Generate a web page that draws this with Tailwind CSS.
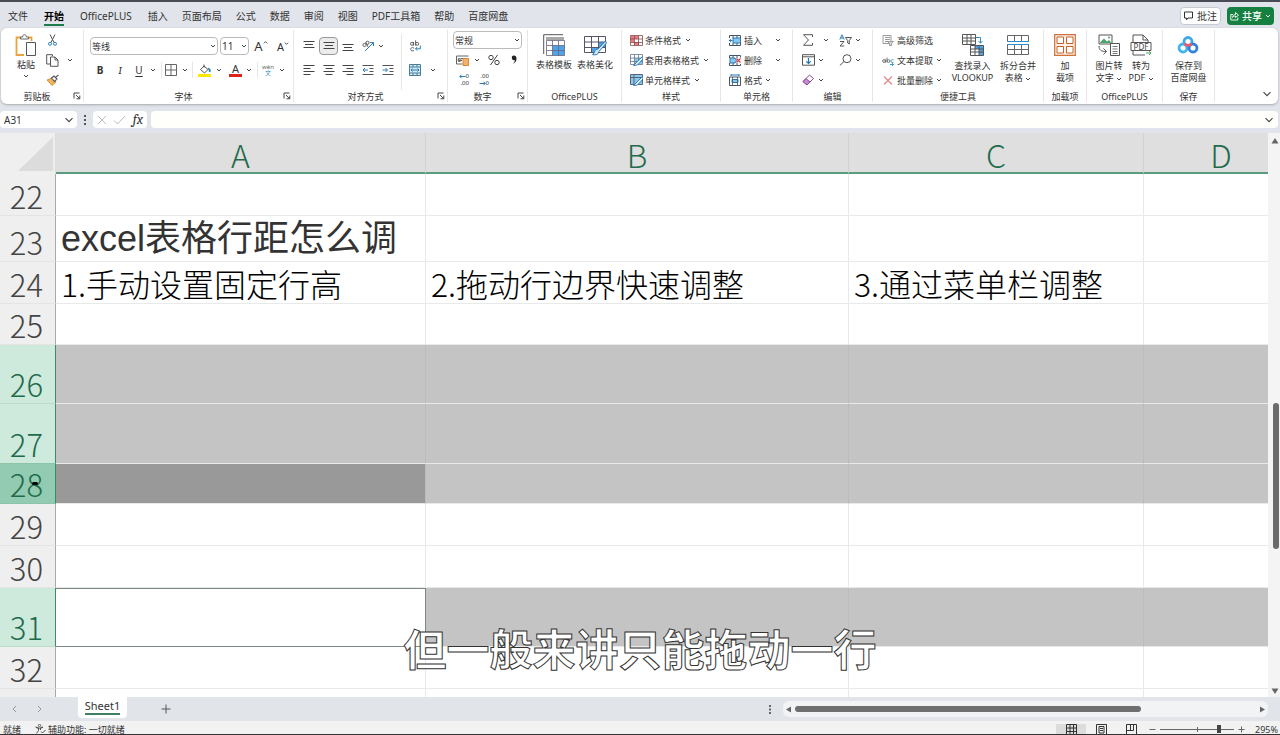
<!DOCTYPE html>
<html lang="zh-CN">
<head>
  <meta charset="UTF-8" />
  <meta name="viewport" content="width=device-width, initial-scale=1" />
  <title>Excel - Sheet1</title>
  <script src="https://cdn.jsdelivr.net/npm/@tailwindcss/browser@4"></script>
  <style>
    body { font-family: "Noto Sans", "Noto Sans CJK SC", sans-serif; }
    .sheet { font-family: "Noto Sans CJK SC", sans-serif; }
    .title-cell { font-family: "Liberation Sans", "Noto Sans CJK SC", sans-serif; }
    .subtitle { font-family: "Noto Sans CJK SC", sans-serif; -webkit-text-stroke: 1px #333; }
  </style>
</head>
<body class="flex h-screen flex-col overflow-hidden border-t-2 border-b border-t-[#4b4b55] border-b-[#333] bg-[#e1e4ea] text-[10px] leading-none text-[#333]">

  <!-- shared glyphs -->
  <svg class="hidden" aria-hidden="true">
    <symbol id="chev" viewBox="0 0 6 6"><path d="M1 2l2 2 2-2" fill="none" stroke="#444" stroke-width="1"/></symbol>
    <symbol id="chev-lg" viewBox="0 0 10 10"><path d="M1.500 3.200l3.500 3.500 3.500-3.500" fill="none" stroke="#444" stroke-width="1.100"/></symbol>
    <symbol id="launch" viewBox="0 0 8 8"><path d="M1 6.500V1h5.500M3 3l3.500 3.500M6.800 3.500v3.300H3.500" fill="none" stroke="#444" stroke-width="1"/></symbol>
  </svg>

  <!-- tabs -->
  <header class="flex h-[26px] shrink-0 items-center justify-between pt-[2px] pr-[6px]">
    <nav class="flex items-center">
      <a href="#" class="px-2">文件</a>
      <a href="#" class="px-2 font-bold text-black"><span class="block border-b-2 border-[#1f7a4d] pt-1 pb-[3px]">开始</span></a>
      <a href="#" class="px-2">OfficePLUS</a>
      <a href="#" class="pr-[7px] pl-2">插入</a>
      <a href="#" class="px-[7px]">页面布局</a>
      <a href="#" class="px-[7px]">公式</a>
      <a href="#" class="px-[7px]">数据</a>
      <a href="#" class="px-[7px]">审阅</a>
      <a href="#" class="px-[7px]">视图</a>
      <a href="#" class="px-[7px]">PDF工具箱</a>
      <a href="#" class="px-[7px]">帮助</a>
      <a href="#" class="px-[7px]">百度网盘</a>
    </nav>
    <div class="flex gap-[6px]">
      <button class="flex h-[18px] items-center gap-1 rounded-sm border border-[#c8cacf] bg-white px-[3px]">
        <svg class="h-[10px] w-[9px]" viewBox="0 0 9 10"><path d="M.5 1h8v6H4L2.500 8.800V7H.5z" fill="none" stroke="#333"/></svg>批注
      </button>
      <button class="flex h-[18px] items-center gap-[3px] rounded-sm bg-[#15803f] px-[3px] font-medium text-white">
        <svg class="h-[10px] w-[9px]" viewBox="0 0 9 10"><path d="M3 3.500H.8v5.500h7V6.500M2.500 6.500c.3-2 1.500-3 3-3V1.500L8.500 4.300 5.500 6.500V5c-1.300 0-2.200.5-3 1.500z" fill="none" stroke="#fff" stroke-width=".9"/></svg>共享
        <svg class="size-[6px]" viewBox="0 0 6 6"><path d="M1 2l2 2 2-2" fill="none" stroke="#fff"/></svg>
      </button>
    </div>
  </header>

  <!-- ribbon -->
  <section class="mr-[2px] ml-px flex h-[76px] shrink-0 rounded-md bg-white pt-[2px] pb-[2px] text-[9px] shadow-sm shadow-black/20">

    <div class="flex w-[83px] flex-col border-r border-[#e6e6e6]">
      <div class="flex h-[60px] pl-[14px]">
        <button class="flex w-[22px] flex-col items-center pt-[4px]">
          <svg class="h-[23px] w-[22px]" viewBox="0 0 22 23"><path d="M9 21H1.500V3.500H6M13 3.500h3.500V7" fill="none" stroke="#e8a33d" stroke-width="1.800"/><path d="M5.500 5V3h2c0-3 4-3 4 0h2v2z" fill="#fff" stroke="#666"/><path d="M11.500 8.500h9v13h-9z" fill="#fff" stroke="#555"/></svg>
          <span class="mt-[3px] whitespace-nowrap">粘贴</span>
          <svg class="mt-1 size-[6px]"><use href="#chev"/></svg>
        </button>
        <div class="ml-[8px] flex w-[14px] flex-col">
          <button class="flex h-5 items-center justify-center" aria-label="剪切"><svg class="h-[12px] w-[9px]" viewBox="0 0 9 12"><path d="M2 .5l4 8M7 .5l-4 8" fill="none" stroke="#555"/><circle cx="2" cy="9.800" r="1.500" fill="none" stroke="#2b7fb8"/><circle cx="7" cy="9.800" r="1.500" fill="none" stroke="#2b7fb8"/></svg></button>
          <button class="flex h-5 items-center justify-center" aria-label="复制"><svg class="h-[13px] w-[13px]" viewBox="0 0 13 13"><path d="M4 10H.7V.7h5.800V2" fill="none" stroke="#555"/><path d="M4.500 3h4.500l3 3v6.300H4.500zM9 3v3h3" fill="#fff" stroke="#555"/></svg></button>
          <button class="flex h-5 items-center justify-center" aria-label="格式刷"><svg class="h-[12px] w-[13px]" viewBox="0 0 13 12"><path d="M1 6l5-2 4 4-4 3.500z" fill="#efb45c" stroke="#c98422" stroke-width=".8"/><path d="M5.500 4L8 2l3 3-2.500 2.500zM9.500 3.500L12.500.8" fill="#fff" stroke="#555" stroke-width="1.100"/></svg></button>
        </div>
        <svg class="mt-[27px] ml-[8px] size-[6px]"><use href="#chev"/></svg>
      </div>
      <div class="flex h-3 items-center"><span class="flex-1 text-center">剪贴板</span><button aria-label="剪贴板设置" class="mr-[2px]"><svg class="size-[8px]"><use href="#launch"/></svg></button></div>
    </div>

    <div class="flex w-[210px] flex-col border-r border-[#e6e6e6]">
      <div class="h-[60px] pt-1 pl-[6px]">
        <div class="flex h-6 items-center gap-[2px]">
          <label class="relative w-[128px]"><select aria-label="字体" class="block h-[18px] w-full appearance-none rounded-sm border border-[#bbb] bg-white px-px"><option>等线</option></select><svg class="absolute top-[6px] right-[2px] size-[6px]"><use href="#chev"/></svg></label>
          <label class="relative w-[29px]"><select aria-label="字号" class="block h-[18px] w-full appearance-none rounded-sm border border-[#bbb] bg-white px-px text-[10px]"><option>11</option></select><svg class="absolute top-[6px] right-[2px] size-[6px]"><use href="#chev"/></svg></label>
          <button class="flex w-5 items-start justify-center text-[13px]" aria-label="增大字号">A<svg class="size-[5px]" viewBox="0 0 6 6"><path d="M1 4l2-2 2 2" fill="none" stroke="#333"/></svg></button>
          <button class="flex w-5 items-start justify-center text-[11px]" aria-label="减小字号">A<svg class="size-[5px]" viewBox="0 0 6 6"><path d="M1 2l2 2 2-2" fill="none" stroke="#333"/></svg></button>
        </div>
        <div class="flex h-6 items-center">
          <button class="w-5 text-center text-[10px] font-bold">B</button>
          <button class="w-5 text-center font-serif text-[11px] italic">I</button>
          <button class="w-[18px] text-center text-[10px] underline underline-offset-2">U</button>
          <svg class="mr-[5px] ml-[2px] size-[6px]"><use href="#chev"/></svg>
          <button aria-label="边框" class="flex h-4 items-center gap-[5px] border-l border-[#e6e6e6] pr-[4px] pl-[3px]"><svg class="size-[12px]" viewBox="0 0 12 12"><path d="M.5.5h11v11H.5zM6 .5v11M.5 6h11" fill="none" stroke="#666"/></svg><svg class="size-[6px]"><use href="#chev"/></svg></button>
          <button aria-label="填充颜色" class="flex h-4 items-center gap-[5px] border-l border-[#e6e6e6] pl-[5px]"><svg class="size-[13px]" viewBox="0 0 13 13"><path d="M2.500 5.500L6 2l4 3.500L6.500 9z" fill="#fff" stroke="#555"/><path d="M6 3.500V.5" stroke="#555"/><path d="M10 4.500c2 .5 2 2 1.500 3.500" fill="none" stroke="#2b7fb8" stroke-width="1.800"/><path d="M0 10h13v3H0z" fill="#fbe800"/></svg><svg class="size-[6px]"><use href="#chev"/></svg></button>
          <button aria-label="字体颜色" class="ml-[7px] flex items-center gap-[4px]"><span class="w-[13px] border-b-[3px] border-[#e0211b] text-center text-[11px] leading-[10px]">A</span><svg class="size-[6px]"><use href="#chev"/></svg></button>
          <button aria-label="拼音" class="ml-[5px] flex h-4 items-center gap-[5px] border-l border-[#e6e6e6] pl-[4px]"><span class="w-[12px] text-center text-[6px] leading-[6px] text-[#666]">wén<br /><span class="text-[#2b8fc8]">文</span></span><svg class="size-[6px]"><use href="#chev"/></svg></button>
        </div>
      </div>
      <div class="flex h-3 items-center"><span class="flex-1 text-center">字体</span><button aria-label="字体设置" class="mr-[2px]"><svg class="size-[8px]"><use href="#launch"/></svg></button></div>
    </div>

    <div class="flex w-[154px] flex-col border-r border-[#e6e6e6]">
      <div class="flex h-[60px] pt-1 pl-[5px]">
        <div>
          <div class="flex h-6 items-center">
            <button aria-label="顶端对齐" class="flex w-5 justify-center"><svg class="h-[12px] w-[12px]" viewBox="0 0 12 12"><path d="M.5 1.500h11M2 4.500h8M.5 7.500h11" stroke="#444"/></svg></button>
            <button aria-label="垂直居中" class="flex h-[18px] w-[19px] items-center justify-center rounded-sm border border-[#999] bg-[#ececec]"><svg class="h-[12px] w-[12px]" viewBox="0 0 12 12"><path d="M.5 2.500h11M2 5.500h8M.5 8.500h11" stroke="#444"/></svg></button>
            <button aria-label="底端对齐" class="flex w-5 justify-center"><svg class="h-[12px] w-[12px]" viewBox="0 0 12 12"><path d="M.5 4.500h11M2 7.500h8M.5 10.500h11" stroke="#444"/></svg></button>
            <button aria-label="方向" class="flex w-5 justify-center"><svg class="size-[12px]" viewBox="0 0 12 12"><path d="M3 11L11 3M8 2.500h3.500V6" fill="none" stroke="#2b7fb8"/><circle cx="2.500" cy="5" r="1.600" fill="none" stroke="#555" stroke-width=".9"/><circle cx="5.500" cy="2.800" r="1.600" fill="none" stroke="#555" stroke-width=".9"/><path d="M4 2.500l2 4.500" stroke="#555" stroke-width=".9"/></svg></button>
            <svg class="size-[6px]"><use href="#chev"/></svg>
          </div>
          <div class="flex h-6 items-center">
            <button aria-label="左对齐" class="flex w-5 justify-center"><svg class="h-[12px] w-[12px]" viewBox="0 0 12 12"><path d="M.5 1.500h11M.5 4.500h7M.5 7.500h11M.5 10.500h7" stroke="#444"/></svg></button>
            <button aria-label="居中" class="flex w-[19px] justify-center"><svg class="h-[12px] w-[12px]" viewBox="0 0 12 12"><path d="M.5 1.500h11M2.500 4.500h7M.5 7.500h11M2.500 10.500h7" stroke="#444"/></svg></button>
            <button aria-label="右对齐" class="flex w-5 justify-center"><svg class="h-[12px] w-[12px]" viewBox="0 0 12 12"><path d="M.5 1.500h11M4.500 4.500h7M.5 7.500h11M4.500 10.500h7" stroke="#444"/></svg></button>
            <button aria-label="减少缩进" class="flex w-5 justify-center"><svg class="h-[12px] w-[12px]" viewBox="0 0 12 12"><path d="M.5 1.500h11M7.500 4.500h4M7.500 7.500h4M.5 10.500h11" stroke="#555"/><path d="M6 6H1M3 4L1 6l2 2" fill="none" stroke="#2b7fb8"/></svg></button>
            <button aria-label="增加缩进" class="flex w-5 justify-center"><svg class="h-[12px] w-[12px]" viewBox="0 0 12 12"><path d="M.5 1.500h11M7.500 4.500h4M7.500 7.500h4M.5 10.500h11" stroke="#555"/><path d="M.5 6h5M3.500 4l2 2-2 2" fill="none" stroke="#2b7fb8"/></svg></button>
          </div>
        </div>
        <div class="ml-[3px] border-l border-[#e6e6e6] pl-[7px]">
          <button aria-label="自动换行" class="flex h-6 items-center"><svg class="size-[12px]" viewBox="0 0 12 12"><g fill="none" stroke="#555" stroke-width=".9"><circle cx="3" cy="3.800" r="1.500"/><path d="M4.600 2v3.600M6.600.3v5.300M5 8.200c-2-1.500-3.500 0-3.300 1.300S3.500 11.500 5 10.500"/><circle cx="8.200" cy="3.800" r="1.500"/></g><path d="M11.300 5.500v3.300H6.500M8.300 7L6.500 8.800l1.800 1.800" fill="none" stroke="#2b7fb8"/></svg></button>
          <button aria-label="合并后居中" class="flex h-6 items-center gap-[9px]"><svg class="size-[12px]" viewBox="0 0 12 12"><path d="M.5.5h11v11H.5zM.5 3h11M.5 9h11M4 .5V3M8 .5V3M4 9v2.500M8 9v2.500" fill="#d6ecf8" stroke="#4a7c96"/><path d="M2 6h8M3.500 4.500L2 6l1.500 1.500M8.500 4.500L10 6 8.500 7.500" fill="none" stroke="#1b78b5"/></svg><svg class="size-[6px]"><use href="#chev"/></svg></button>
        </div>
      </div>
      <div class="flex h-3 items-center"><span class="flex-1 text-center">对齐方式</span><button aria-label="对齐设置" class="mr-[2px]"><svg class="size-[8px]"><use href="#launch"/></svg></button></div>
    </div>

    <div class="flex w-[80px] flex-col border-r border-[#e6e6e6]">
      <div class="h-[60px] pl-[5px]">
        <div class="flex h-5 items-center"><label class="relative w-[69px]"><select aria-label="数字格式" class="block h-[18px] w-full appearance-none rounded-sm border border-[#bbb] bg-white px-px"><option>常规</option></select><svg class="absolute top-[6px] right-[2px] size-[6px]"><use href="#chev"/></svg></label></div>
        <div class="flex h-5 items-center pl-[3px]">
          <button aria-label="会计格式" class="flex items-center gap-[5px]"><svg class="h-[11px] w-[13px]" viewBox="0 0 13 11"><path d="M.5 1h12M.5 1v8h6M3 3v4M5 3.500h3M3 5.500h3" fill="none" stroke="#666"/><circle cx="3.500" cy="5" r="1.500" fill="none" stroke="#666"/><path d="M7 3.500h5.500V10.500H7z" fill="#f2b26b" stroke="#d9863a"/></svg><svg class="size-[6px]"><use href="#chev"/></svg></button>
          <button aria-label="百分比" class="ml-[8px] flex"><svg class="h-[12px] w-[12px]" viewBox="0 0 12 12"><circle cx="3" cy="3.500" r="2.200" fill="none" stroke="#444"/><circle cx="9" cy="8.500" r="2.200" fill="none" stroke="#444"/><path d="M9.500 1l-7 10" stroke="#444"/></svg></button>
          <button aria-label="千位分隔" class="ml-[11px] flex"><svg class="h-[10px] w-[6px]" viewBox="0 0 6 10"><path d="M3 .5a2.300 2.300 0 1 0 .8 4.500C3.700 7 2.800 8 1.500 9c3-1 4-3 4-5.500C5.500 1.500 4.500.5 3 .5z" fill="#222"/></svg></button>
        </div>
        <div class="flex h-5 items-center gap-[7px] pl-[3px] text-[6px] leading-[7px]">
          <button aria-label="增加小数位" class="flex w-[13px] flex-col items-end"><span class="flex items-center"><svg class="h-[5px] w-[7px]" viewBox="0 0 7 5"><path d="M6.500 2.500H1M2.500.7L.8 2.500l1.700 1.800" fill="none" stroke="#2b7fb8"/></svg>0</span><span>.00</span></button>
          <button aria-label="减少小数位" class="flex w-[13px] flex-col items-end"><span>.00</span><span class="flex items-center"><svg class="h-[5px] w-[7px]" viewBox="0 0 7 5"><path d="M.5 2.500H6M4.500.7l1.700 1.800-1.700 1.800" fill="none" stroke="#2b7fb8"/></svg>0</span></button>
        </div>
      </div>
      <div class="flex h-3 items-center"><span class="flex-1 text-center">数字</span><button aria-label="数字设置" class="mr-[2px]"><svg class="size-[8px]"><use href="#launch"/></svg></button></div>
    </div>

    <div class="flex w-[94px] flex-col border-r border-[#e6e6e6]">
      <div class="flex h-[60px] gap-[5px] pt-1 pl-[8px]">
        <button class="flex w-9 flex-col items-center whitespace-nowrap"><svg class="h-[22px] w-[22px]" viewBox="0 0 22 22"><path d="M.7 20V.7H20" fill="none" stroke="#555"/><path d="M3 3h18v3H3z" fill="#a8a8a8"/><path d="M3.500 6.500h18v15h-18z" fill="#fff"/><path d="M9.500 11.500h12v10h-12z" fill="#4fa3e8"/><path d="M3.500 6.500h18v15h-18zM3.500 11.500h18M3.500 16.500h18M9.500 6.500v15M15.500 6.500v15" fill="none" stroke="#667" stroke-width=".8"/></svg><span class="mt-1">表格模板</span></button>
        <button class="flex w-9 flex-col items-center whitespace-nowrap"><svg class="h-[22px] w-[23px]" viewBox="0 0 23 22"><path d="M.5 2.500h21v16H.5z" fill="#fff"/><path d="M7.500 13.500h7v5h-7zM14.500 8h7v5.500h-7z" fill="#4fa3e8"/><path d="M.5 2.500h21v16H.5zM.5 8h21M.5 13.500h21M7.500 2.500v16M14.500 2.500v16" fill="none" stroke="#556"/><path d="M21.500 7L14 15l-2 .5c-1.500 1-1 3-3.500 5 3 1 6 0 6.500-3l7.500-8.500z" fill="#cfe6f7" stroke="#2b78b5"/></svg><span class="mt-1">表格美化</span></button>
      </div>
      <div class="flex h-3 items-center justify-center">OfficePLUS</div>
    </div>

    <div class="flex w-[99px] flex-col border-r border-[#e6e6e6]">
      <div class="h-[60px] pl-[8px]">
        <button class="flex h-5 items-center gap-[2px]"><svg class="h-[11px] w-[13px]" viewBox="0 0 13 11"><path d="M.5.5h12v10H.5z" fill="#fff"/><path d="M1 1h7v3H1zM4 7h5v3H4zM1 4h3v3H1z" fill="#e8797c"/><path d="M.5.5h12v10H.5zM.5 4h12M.5 7.500h12M4.500.5v10M8.500.5v10" fill="none" stroke="#8a4a4d" stroke-width=".8"/></svg>条件格式<svg class="ml-[2px] size-[6px]"><use href="#chev"/></svg></button>
        <button class="flex h-5 items-center gap-[2px]"><svg class="h-[12px] w-[13px]" viewBox="0 0 13 12"><path d="M.5.5h12v10H.5z" fill="#fff"/><path d="M4.500 4h8v6.500h-8z" fill="#8cc7ee"/><path d="M.5.5h12v10H.5zM.5 4h12M.5 7.500h12M4.500.5v10M8.500.5v10" fill="none" stroke="#678" stroke-width=".8"/><path d="M12.500 2.500L6 9l-2.500 2.500L7.500 11l5.500-6z" fill="#dcf0fb" stroke="#2b78b5" stroke-width=".9"/></svg>套用表格格式<svg class="ml-[2px] size-[6px]"><use href="#chev"/></svg></button>
        <button class="flex h-5 items-center gap-[2px]"><svg class="h-[12px] w-[13px]" viewBox="0 0 13 12"><path d="M.5.5h12v10H.5z" fill="#8cc7ee"/><path d="M.5.5h12v10H.5zM.5 3.500h12M4 .5v10" fill="none" stroke="#567"/><path d="M12.500 2.500L6 9l-2.500 2.500L7.500 11l5.500-6z" fill="#dcf0fb" stroke="#2b78b5" stroke-width=".9"/></svg>单元格样式<svg class="ml-[2px] size-[6px]"><use href="#chev"/></svg></button>
      </div>
      <div class="flex h-3 items-center justify-center">样式</div>
    </div>

    <div class="flex w-[72px] flex-col border-r border-[#e6e6e6]">
      <div class="h-[60px] pr-[11px] pl-[8px]">
        <button class="flex h-5 w-full items-center gap-[3px]"><svg class="h-[11px] w-[12px]" viewBox="0 0 12 11"><path d="M.5 3V.5h11v2.500M.5 8v2.500h11V8M4 .5V3M8 .5V3M4 8v2.500M8 8v2.500" fill="none" stroke="#456"/><path d="M4 3h7.500v5H4z" fill="#8cc7ee" stroke="#2b78b5"/><path d="M3.500 5.500H0M2 3.800L.3 5.500 2 7.200" fill="none" stroke="#1b78b5"/></svg>插入<svg class="ml-auto size-[6px]"><use href="#chev"/></svg></button>
        <button class="flex h-5 w-full items-center gap-[3px]"><svg class="h-[11px] w-[12px]" viewBox="0 0 12 11"><path d="M.5 3V.5h11v2M.5 8v2.500h11V9M4 .5V3M8 .5V3M4 8v2.500M8 8v2.500" fill="none" stroke="#456"/><path d="M1 3h5l1.500 2.500L6 8H1z" fill="#8cc7ee" stroke="#2b78b5"/><path d="M7.500 3.500l4 4M11.500 3.500l-4 4" stroke="#d64545" stroke-width="1.200"/></svg>删除<svg class="ml-auto size-[6px]"><use href="#chev"/></svg></button>
        <button class="flex h-5 w-full items-center gap-[3px]"><svg class="h-[12px] w-[12px]" viewBox="0 0 12 12"><path d="M2 1h8M2 0v2M10 0v2" stroke="#2b78b5"/><path d="M.5 3h11v8.500H.5z" fill="#fff" stroke="#456"/><path d="M3 5.500h6v3H3z" fill="#8cc7ee" stroke="#2b78b5"/><path d="M3.500 3v8.500M8.500 3v8.500" stroke="#456" stroke-width=".8"/></svg>格式<svg class="size-[6px]"><use href="#chev"/></svg></button>
      </div>
      <div class="flex h-3 items-center justify-center">单元格</div>
    </div>

    <div class="flex w-[80px] flex-col border-r border-[#e6e6e6]">
      <div class="grid h-[60px] grid-cols-[37px_1fr] grid-rows-3 pl-[9px]">
        <button aria-label="求和" class="flex items-center gap-[8px]"><svg class="h-[12px] w-[13px]" viewBox="0 0 13 12"><path d="M10.500 3V.7H1.500L6.500 6l-5 5.300h9V9" fill="none" stroke="#555"/></svg><svg class="size-[6px]"><use href="#chev"/></svg></button>
        <button aria-label="排序和筛选" class="flex items-center gap-[3px]"><svg class="h-[13px] w-[13px]" viewBox="0 0 13 13"><path d="M.8 5.500L3 .8l2.200 4.700M1.600 4h2.800" fill="none" stroke="#2b7fb8"/><path d="M1 7.500h4L1 12h4.200" fill="none" stroke="#555"/><path d="M6.500 3.500h6L10.300 6.500V10L8.700 9V6.500z" fill="none" stroke="#555"/></svg><svg class="size-[6px]"><use href="#chev"/></svg></button>
        <button aria-label="填充" class="flex items-center gap-[3px]"><svg class="h-[12px] w-[13px]" viewBox="0 0 13 12"><path d="M.5.7h12v10.500H.5zM.5 2.800h12" fill="none" stroke="#555"/><path d="M6.500 4v5.500M4.300 7.300l2.200 2.200 2.200-2.200" fill="none" stroke="#1b78b5" stroke-width="1.200"/></svg><svg class="size-[6px]"><use href="#chev"/></svg></button>
        <button aria-label="查找和选择" class="flex items-center gap-[3px]"><svg class="h-[12px] w-[13px]" viewBox="0 0 13 12"><circle cx="8" cy="4.700" r="4" fill="none" stroke="#555"/><path d="M5 7.500L.8 11.500" stroke="#555"/></svg><svg class="size-[6px]"><use href="#chev"/></svg></button>
        <button aria-label="清除" class="flex items-center gap-[3px]"><svg class="h-[12px] w-[13px]" viewBox="0 0 13 12"><path d="M1 7.500L7.500 1 11.500 4.500 5 11z" fill="#fff" stroke="#8c4a9c"/><path d="M1 7.500L4 4.500l4 3.500-3 3z" fill="#c58ad0" stroke="#8c4a9c"/></svg><svg class="size-[6px]"><use href="#chev"/></svg></button>
      </div>
      <div class="flex h-3 items-center justify-center">编辑</div>
    </div>

    <div class="flex w-[171px] flex-col border-r border-[#e6e6e6]">
      <div class="flex h-[60px] pl-[9px]">
        <div class="w-[69px]">
          <button class="flex h-5 items-center gap-[3px]"><svg class="h-[11px] w-[12px]" viewBox="0 0 12 11"><path d="M1 .5h8v8H1zM3 2.500h5M3 4.500h5M3 6.500h3" fill="none" stroke="#999"/><path d="M5.500 6.500h6L9.500 8.500v2h-2v-2z" fill="#ddd" stroke="#888" stroke-width=".8"/></svg>高级筛选</button>
          <button class="flex h-5 items-center gap-[3px]"><svg class="h-[11px] w-[12px]" viewBox="0 0 12 11"><g fill="none" stroke="#666" stroke-width=".9"><circle cx="2" cy="6" r="1.400"/><path d="M3.500 4.400v3.200M5 2.500v5"/><circle cx="6.500" cy="6" r="1.400"/></g><path d="M11.500 4.800C9.500 4 8.800 5.500 9 6.500s1.500 1.500 2.500.8M8 9.500h3.500M10 8l1.500 1.500L10 11" fill="none" stroke="#2b8fc8" stroke-width=".9"/></svg>文本提取<svg class="size-[6px]"><use href="#chev"/></svg></button>
          <button class="flex h-5 items-center gap-[3px]"><svg class="h-[11px] w-[12px]" viewBox="0 0 12 11"><path d="M2 1.500l8 8M10 1.500l-8 8" stroke="#d98a8a" stroke-width="1.200"/></svg>批量删除<svg class="size-[6px]"><use href="#chev"/></svg></button>
        </div>
        <button class="flex w-[43px] flex-col items-center pt-1 whitespace-nowrap"><svg class="h-[22px] w-[22px]" viewBox="0 0 22 22"><path d="M.5.5h13v10H.5zM.5 4h13M.5 7h13M5 .5v10M9 .5v10" fill="none" stroke="#555"/><path d="M14 3.500h4.500V9M16.500 7l2 2.200L20.500 7" fill="none" stroke="#2b8fc8"/><path d="M8.500 11.500h13v10h-13z" fill="#fff"/><path d="M13 11.500h8.500v10H17V15h-4z" fill="#4fa3e8"/><path d="M8.500 11.500h13v10h-13zM8.500 15h13M8.500 18h13M13 11.500v10M17 11.500v10" fill="none" stroke="#555"/></svg><span class="mt-1 leading-[12px]">查找录入<br />VLOOKUP</span></button>
        <button class="ml-[4px] flex w-[40px] flex-col items-center pt-1"><svg class="h-[22px] w-[22px]" viewBox="0 0 22 22"><path d="M.5 1.500h21v6H.5zM7.500 1.500v6M14.500 1.500v6M.5 10.500h21v10H.5zM.5 15.500h21M7.500 10.500v10M14.500 10.500v10" fill="none" stroke="#666"/><path d="M.5 7.500h21M.5 10.500h21" stroke="#2b8fc8"/></svg><span class="mt-1 leading-[12px] whitespace-nowrap">拆分合并<br />表格 <svg class="inline size-[6px]"><use href="#chev"/></svg></span></button>
      </div>
      <div class="flex h-3 items-center justify-center">便捷工具</div>
    </div>

    <div class="flex w-[43px] flex-col border-r border-[#e6e6e6]">
      <div class="flex h-[60px] justify-center pt-1">
        <button class="flex flex-col items-center"><svg class="h-[22px] w-[22px]" viewBox="0 0 22 22"><path d="M.7.7h20.600v20.600H.7z" fill="#fdf0e6" stroke="#d0703a" stroke-width="1.200"/><path d="M3 3h6.500v6.500H3zM12.500 3H19v6.500h-6.500zM3 12.500h6.500V19H3zM12.500 12.500H19V19h-6.500z" fill="#fff" stroke="#c4622c"/></svg><span class="mt-1 leading-[12px]">加<br />载项</span></button>
      </div>
      <div class="flex h-3 items-center justify-center whitespace-nowrap">加载项</div>
    </div>

    <div class="flex w-[76px] flex-col border-r border-[#e6e6e6]">
      <div class="flex h-[60px] pt-1 pl-[6px]">
        <button class="flex w-[32px] flex-col items-center whitespace-nowrap"><svg class="h-[22px] w-[22px]" viewBox="0 0 22 22"><path d="M1 1h13v9H1z" fill="#fff" stroke="#555"/><path d="M1.500 9L6 4.500l3 3 2-1.500 2.500 3z" fill="#4ba36b"/><circle cx="11" cy="3.500" r="1" fill="#4ba36b"/><path d="M1 12c0 4 2 5.500 7 5.500M5.500 14.500l3 3-3 3" fill="none" stroke="#555"/><path d="M12.500 9.500h9v12h-9z" fill="#fff" stroke="#555"/><path d="M14.500 12.500h5M14.500 15h5M14.500 17.500h5M14.500 19.500h5" stroke="#555" stroke-width=".8"/></svg><span class="mt-1 leading-[12px]">图片转<br />文字 <svg class="inline size-[6px]"><use href="#chev"/></svg></span></button>
        <button class="flex w-[32px] flex-col items-center whitespace-nowrap"><svg class="h-[22px] w-[22px]" viewBox="0 0 22 22"><path d="M3 8V1h10l5 5v2M13 1v5h5M3 17v4h12" fill="none" stroke="#555"/><path d="M1 8.500h20v8H1z" fill="#fff" stroke="#555"/><path d="M16 19h5M19 17l2 2-2 2" fill="none" stroke="#4ba36b"/><text x="11" y="15.500" text-anchor="middle" font-size="8" fill="#444">PDF</text></svg><span class="mt-1 leading-[12px]">转为<br />PDF <svg class="inline size-[6px]"><use href="#chev"/></svg></span></button>
      </div>
      <div class="flex h-3 items-center justify-center">OfficePLUS</div>
    </div>

    <div class="flex w-[52px] flex-col border-r border-[#e6e6e6]">
      <div class="flex h-[60px] justify-center pt-1">
        <button class="flex flex-col items-center whitespace-nowrap"><svg class="h-[22px] w-[22px]" viewBox="0 0 22 22"><g fill="none" stroke-width="2.800"><circle cx="11" cy="7.500" r="4" stroke="#3fa9e8"/><circle cx="6" cy="14" r="4" stroke="#3fb4ee"/><circle cx="16" cy="14" r="4" stroke="#2f80e0"/><path d="M7.600 9.500a4 4 0 0 0 6.800 0" stroke="#ee5a6c"/></g></svg><span class="mt-1 leading-[12px]">保存到<br />百度网盘</span></button>
      </div>
      <div class="flex h-3 items-center justify-center">保存</div>
    </div>

    <button aria-label="折叠功能区" class="mt-auto mr-[6px] mb-[3px] ml-auto"><svg class="size-[10px]"><use href="#chev-lg"/></svg></button>
  </section>

  <!-- formula bar -->
  <section class="flex h-[29px] shrink-0 items-center pt-[2px] pr-[2px]">
    <label class="flex h-[17px] w-[77px] items-center rounded-sm bg-white pr-[3px] pl-1"><input aria-label="名称框" value="A31" class="w-full min-w-0 text-[10px] outline-none" /><svg class="size-[10px] shrink-0"><use href="#chev-lg"/></svg></label>
    <svg class="mx-[6px] h-[10px] w-[4px]" viewBox="0 0 4 10"><path d="M1 0h2v2H1zM1 4h2v2H1zM1 8h2v2H1z" fill="#555"/></svg>
    <div class="flex h-[17px] w-[54px] items-center justify-between rounded-sm bg-white px-[4px]">
      <button aria-label="取消"><svg class="size-[10px]" viewBox="0 0 10 10"><path d="M1 1l8 8M9 1L1 9" stroke="#bbb"/></svg></button>
      <button aria-label="输入"><svg class="h-[10px] w-[13px]" viewBox="0 0 13 10"><path d="M1 5.500L4.500 9 12 1" fill="none" stroke="#bbb"/></svg></button>
      <button aria-label="插入函数" class="font-serif text-[14px] italic">fx</button>
    </div>
    <label class="ml-[4px] flex h-[17px] flex-1 items-center rounded-sm bg-[#fffffc] pr-[4px]"><input aria-label="编辑栏" class="w-full outline-none" /><svg class="size-[10px] shrink-0"><use href="#chev-lg"/></svg></label>
  </section>

  <!-- sheet -->
  <main class="flex min-h-0 flex-1 bg-[#f4f4f5]">
    <div class="sheet relative flex-1 overflow-hidden bg-white">
      <table class="w-full min-w-[1298px] table-fixed border-separate border-spacing-0 text-[32px] leading-[32px] text-black [&_td]:border-r [&_td]:border-b [&_td]:border-[#e8eae9] [&_td]:px-[5px] [&_td]:pb-[4px] [&_td]:text-left [&_td]:align-bottom [&_td]:font-light [&_td]:whitespace-nowrap [&_tbody_th]:border-r [&_tbody_th]:border-b [&_tbody_th]:pr-[12px] [&_tbody_th]:pb-[4px] [&_tbody_th]:text-right [&_tbody_th]:align-bottom [&_tbody_th]:text-[31px] [&_tbody_th]:leading-[31px] [&_tbody_th]:font-light">
        <colgroup><col class="w-[56px]" /><col class="w-[370px]" /><col class="w-[423px]" /><col class="w-[295px]" /><col /></colgroup>
        <thead>
          <tr class="h-[41px] text-[32px] text-[#1f6b4c] [&_th]:font-light">
            <th class="border-r border-[#ddd] bg-[#efefef] align-top"><svg class="h-[40px] w-[54px]" viewBox="0 0 54 40"><path d="M18 38L53 4v34z" fill="#dcdcdc"/></svg></th>
            <th class="border-r border-b-2 border-r-[#d0d2d1] border-b-[#5c9c7e] bg-[#dfdfdf] pt-[3px]">A</th>
            <th class="border-r border-b-2 border-r-[#d0d2d1] border-b-[#5c9c7e] bg-[#dfdfdf] pt-[3px]">B</th>
            <th class="border-r border-b-2 border-r-[#d0d2d1] border-b-[#5c9c7e] bg-[#dfdfdf] pt-[3px]">C</th>
            <th class="border-b-2 border-[#5c9c7e] bg-[#dfdfdf] pt-[3px]">D</th>
          </tr>
        </thead>
        <tbody>
          <tr class="h-[42px]"><th class="border-r-[#aaa] border-b-[#e4e4e4] bg-[#efefef] text-[#444]">22</th><td></td><td></td><td></td><td></td></tr>
          <tr class="h-[46px]"><th class="border-r-[#aaa] border-b-[#e4e4e4] bg-[#efefef] text-[#444]">23</th><td class="title-cell text-[36px] leading-[36px] !font-normal text-[#333]">excel表格行距怎么调</td><td></td><td></td><td></td></tr>
          <tr class="h-[42px]"><th class="border-r-[#aaa] border-b-[#e4e4e4] bg-[#efefef] text-[#444]">24</th><td>1.手动设置固定行高</td><td>2.拖动行边界快速调整</td><td>3.通过菜单栏调整</td><td></td></tr>
          <tr class="h-[41px]"><th class="border-r-[#aaa] border-b-[#e4e4e4] bg-[#efefef] text-[#444]">25</th><td></td><td></td><td></td><td></td></tr>
          <tr class="h-[59px] bg-[#c4c4c4] [&_td]:!border-r-[#bcbcbc]"><th class="border-r-[#3d8a66] border-b-[#b9dccb] bg-[#cdeadd] text-[#1f6b4c]">26</th><td></td><td></td><td></td><td></td></tr>
          <tr class="h-[60px] bg-[#c4c4c4] [&_td]:!border-r-[#bcbcbc]"><th class="border-r-[#3d8a66] border-b-[#8cc4aa] bg-[#cdeadd] text-[#1f6b4c]">27</th><td></td><td></td><td></td><td></td></tr>
          <tr class="h-[40px] bg-[#c4c4c4] [&_td]:!border-r-[#bcbcbc]"><th class="relative border-r-[#3d8a66] border-b-[#8cc4aa] bg-[#93cbb2] text-[#1f6b4c]">28<span class="absolute top-[18px] left-[32px] h-[3px] w-[6px] rounded-sm bg-black"></span></th><td class="bg-[#999]"></td><td></td><td></td><td></td></tr>
          <tr class="h-[42px]"><th class="border-r-[#aaa] border-b-[#e4e4e4] bg-[#efefef] text-[#444]">29</th><td></td><td></td><td></td><td></td></tr>
          <tr class="h-[42px]"><th class="border-r-[#aaa] border-b-[#e4e4e4] bg-[#efefef] text-[#444]">30</th><td></td><td></td><td></td><td></td></tr>
          <tr class="h-[59px] bg-[#c4c4c4]"><th class="border-r-[#3d8a66] border-b-[#b9dccb] bg-[#cdeadd] text-[#1f6b4c]">31</th><td class="border-t !border-[#7d8884] bg-white"></td><td class="!border-r-[#bcbcbc]"></td><td class="!border-r-[#bcbcbc]"></td><td></td></tr>
          <tr class="h-[42px]"><th class="border-r-[#aaa] border-b-[#e4e4e4] bg-[#efefef] text-[#444]">32</th><td></td><td></td><td></td><td></td></tr>
          <tr class="h-[42px]"><th class="border-r-[#aaa] border-b-[#e4e4e4] bg-[#efefef]"></th><td></td><td></td><td></td><td></td></tr>
        </tbody>
      </table>
    </div>
    <div class="flex w-3 shrink-0 flex-col items-end pt-1 pr-px pb-[2px]">
      <svg class="size-[8px]" viewBox="0 0 8 8"><path d="M4 1l3.500 5.500h-7z" fill="#666"/></svg>
      <div class="flex-[258]"></div>
      <div class="w-[6px] flex-[146] rounded-full bg-[#6b6b6b]"></div>
      <div class="flex-[138]"></div>
      <svg class="size-[8px]" viewBox="0 0 8 8"><path d="M4 7L.5 1.500h7z" fill="#666"/></svg>
    </div>
  </main>

  <!-- sheet tabs -->
  <section class="flex h-[24px] shrink-0 items-center bg-[#e1e4e9] pr-3">
    <button aria-label="上一个" class="ml-[11px]"><svg class="size-[8px]" viewBox="0 0 8 8"><path d="M5 1L2 4l3 3" fill="none" stroke="#999"/></svg></button>
    <button aria-label="下一个" class="ml-[16px]"><svg class="size-[8px]" viewBox="0 0 8 8"><path d="M3 1l3 3-3 3" fill="none" stroke="#999"/></svg></button>
    <button class="mb-[3px] ml-[35px] flex h-[21px] w-[49px] items-center justify-center rounded-b-sm bg-white text-[11px]"><span class="border-b-2 border-[#3f8063] pb-[2px]">Sheet1</span></button>
    <button aria-label="新工作表" class="ml-[34px]"><svg class="size-[10px]" viewBox="0 0 10 10"><path d="M5 .5v9M.5 5h9" stroke="#555"/></svg></button>
    <div class="ml-auto flex w-[502px] items-center">
      <svg class="mr-[11px] ml-[2px] h-[9px] w-[4px]" viewBox="0 0 4 9"><path d="M1 0h2v2H1zM1 3.500h2v2H1zM1 7h2v2H1z" fill="#666"/></svg>
      <div class="flex h-[16px] flex-1 items-center rounded-md bg-[#f2f3f5] pr-[2px] pl-[2px]">
        <svg class="size-[7px]" viewBox="0 0 7 7"><path d="M1 3.500L6 .5v6z" fill="#666"/></svg>
        <div class="ml-[3px] h-[6px] flex-[346] rounded-full bg-[#6f6f6f]"></div>
        <div class="flex-[118]"></div>
        <svg class="size-[7px]" viewBox="0 0 7 7"><path d="M6 3.500L1 .5v6z" fill="#666"/></svg>
      </div>
    </div>
  </section>

  <!-- status bar -->
  <footer class="flex h-[13px] shrink-0 items-center overflow-hidden bg-[#f2f2f3] pt-[3px] pr-[2px] pl-[3px] text-[9px]">
    <span>就绪</span>
    <svg class="mr-[2px] ml-[14px] h-[10px] w-[11px]" viewBox="0 0 11 10"><circle cx="4.500" cy="1.500" r="1.200" fill="none" stroke="#444" stroke-width=".8"/><path d="M.5 3l3 1v2.500L1.500 9.500M8 3L5.500 4v2M1 3.500c2 1 5 1 7-.5M6 7.500l1.500 1.500L10.500 6" fill="none" stroke="#444" stroke-width=".9"/></svg>
    <span>辅助功能: 一切就绪</span>
    <div class="ml-auto flex items-center">
      <button aria-label="普通" class="flex w-[30px] justify-center bg-[#dcdcdc]"><svg class="h-[11px] w-[11px]" viewBox="0 0 11 11"><path d="M.5.5h10v10H.5zM.5 4h10M.5 7.500h10M4 .5v10M7.500.5v10" fill="none" stroke="#333"/></svg></button>
      <button aria-label="页面布局" class="flex w-[30px] justify-center"><svg class="h-[11px] w-[11px]" viewBox="0 0 11 11"><path d="M.5.5h10v10H.5zM3 2.500h5v6.500H3zM4 4.500h3M4 6.500h3" fill="none" stroke="#333"/></svg></button>
      <button aria-label="分页预览" class="flex w-[30px] justify-center"><svg class="h-[11px] w-[11px]" viewBox="0 0 11 11"><path d="M.5.5h10v10H.5zM4.500.5v6M7.500.5v6M.5 6.500h7" fill="none" stroke="#333"/></svg></button>
      <button aria-label="缩小" class="ml-[3px] flex"><svg class="h-[7px] w-[7px]" viewBox="0 0 7 7"><path d="M.5 3.500h6" stroke="#666"/></svg></button>
      <input type="range" aria-label="缩放" min="0" max="100" value="82" class="mx-1 h-[8px] w-[74px] appearance-none bg-[linear-gradient(#666,#666),linear-gradient(#666,#666)] bg-[length:100%_1px,1px_5px] bg-center bg-no-repeat [&::-webkit-slider-thumb]:h-[8px] [&::-webkit-slider-thumb]:w-[4px] [&::-webkit-slider-thumb]:appearance-none [&::-webkit-slider-thumb]:bg-[#444]" />
      <button aria-label="放大" class="flex"><svg class="h-[7px] w-[7px]" viewBox="0 0 7 7"><path d="M.5 3.500h6M3.500.5v6" stroke="#666"/></svg></button>
      <span class="ml-[10px]">295%</span>
    </div>
  </footer>

  <p class="subtitle pointer-events-none absolute inset-x-0 bottom-[66px] text-center text-[43px] leading-[43px] font-bold text-white">但一般来讲只能拖动一行</p>
</body>
</html>
